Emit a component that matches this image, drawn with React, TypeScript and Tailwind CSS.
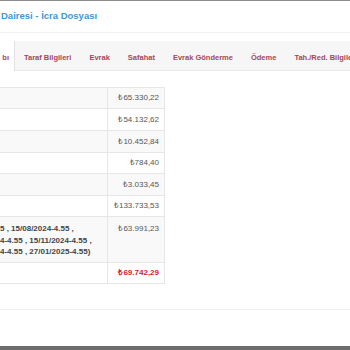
import React from "react";

const tabs = ["Taraf Bilgileri", "Evrak", "Safahat", "Evrak Gönderme", "Ödeme", "Tah./Red. Bilgileri"];

const rows: { h: string; value: string; stripe: boolean }[] = [
  { h: "h-[21px]", value: "₺65.330,22", stripe: true },
  { h: "h-[22px]", value: "₺54.132,62", stripe: false },
  { h: "h-[22px]", value: "₺10.452,84", stripe: true },
  { h: "h-[21px]", value: "₺784,40", stripe: false },
  { h: "h-[22px]", value: "₺3.033,45", stripe: true },
  { h: "h-[21px]", value: "₺133.733,53", stripe: false },
];

export default function App() {
  return (
    <div className="w-[350px] h-[350px] overflow-hidden bg-white flex flex-col font-['Liberation_Sans',Arial,sans-serif]">
      <div className="h-px bg-[#8c8c8c]" />
      {/* dosya başlığı */}
      <div className="h-[32px] shrink-0 flex items-center pl-px border-b border-[#efefef] text-[9.5px] font-bold text-[#3d98d4] whitespace-nowrap">
        Dairesi - İcra Dosyası
      </div>

      {/* sekmeler */}
      <div className="mt-[8px] h-[30px] shrink-0 flex bg-[#f6f6f6] border-b border-[#e8e8e8] whitespace-nowrap">
        <div className="w-[15px] shrink-0 bg-white border-r border-[#e2e2e2] -mb-px flex items-center justify-end pr-[5px] pt-[4px] text-[7.5px] font-bold text-[#a3475a]">
          bı
        </div>
        {tabs.map((t) => (
          <div key={t} className="shrink-0 px-[9px] pt-[4px] flex items-center text-[7.5px] font-bold text-[#a3475a]">
            {t}
          </div>
        ))}
      </div>

      {/* tutar tablosu */}
      <div className="mt-[16px] w-[165px] border-t border-r border-[#e6e6e6] text-[8px] text-[#555]">
        {rows.map((r, i) => (
          <div key={i} className={`flex border-b border-[#e6e6e6] ${r.h} ${r.stripe ? "bg-[#f9f9f9]" : "bg-white"}`}>
            <div className="w-[108px] shrink-0 border-r border-[#e6e6e6]" />
            <div className="flex-1 flex items-center justify-end pr-[5px]">{r.value}</div>
          </div>
        ))}
        <div className="flex border-b border-[#e6e6e6] h-[46px] bg-[#f9f9f9]">
          <div className="w-[108px] shrink-0 border-r border-[#e6e6e6] pt-[6px] font-bold text-[#444] leading-[11.5px] whitespace-nowrap overflow-hidden">
            <div>5 , 15/08/2024-4.55 ,</div>
            <div>4-4.55 , 15/11/2024-4.55 ,</div>
            <div>4-4.55 , 27/01/2025-4.55)</div>
          </div>
          <div className="flex-1 text-right pr-[5px] pt-[6px] leading-[11px]">₺63.991,23</div>
        </div>
        <div className="flex border-b border-[#e6e6e6] h-[21px] bg-white">
          <div className="w-[108px] shrink-0 border-r border-[#e6e6e6]" />
          <div className="flex-1 flex items-center justify-end pr-[5px] font-bold text-[#d2232f]">₺69.742,29</div>
        </div>
      </div>

      <div className="mt-[25px] h-px bg-[#efefef]" />
      <div className="flex-1" />
      <div className="h-[4px] bg-[#6e6e6e]" />
    </div>
  );
}
